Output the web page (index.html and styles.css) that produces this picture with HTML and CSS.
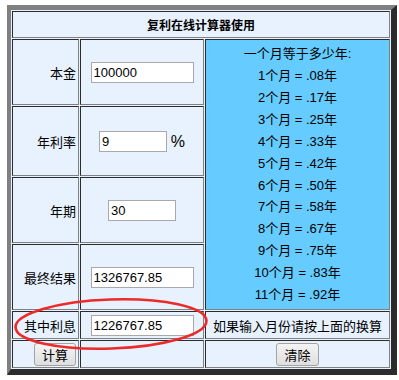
FILE: index.html
```html
<!DOCTYPE html>
<html lang="zh">
<head>
<meta charset="utf-8">
<title>复利在线计算器使用</title>
<link rel="stylesheet" href="styles.css">
</head>
<body>
<div class="page">
<table class="calc">
  <tr class="r-title">
    <td class="title" colspan="3">复利在线计算器使用</td>
  </tr>
  <tr class="r1">
    <td class="label">本金</td>
    <td class="field"><input class="inp wide" type="text" value="100000"></td>
    <td class="blue" rowspan="4">
      <div class="line">一个月等于多少年:</div>
      <div class="line">1个月 = .08年</div>
      <div class="line">2个月 = .17年</div>
      <div class="line">3个月 = .25年</div>
      <div class="line">4个月 = .33年</div>
      <div class="line">5个月 = .42年</div>
      <div class="line">6个月 = .50年</div>
      <div class="line">7个月 = .58年</div>
      <div class="line">8个月 = .67年</div>
      <div class="line">9个月 = .75年</div>
      <div class="line">10个月 = .83年</div>
      <div class="line">11个月 = .92年</div>
    </td>
  </tr>
  <tr class="r2">
    <td class="label">年利率</td>
    <td class="field"><input class="inp narrow" type="text" value="9"> <span class="pct">%</span></td>
  </tr>
  <tr class="r3">
    <td class="label">年期</td>
    <td class="field"><input class="inp narrow" type="text" value="30"></td>
  </tr>
  <tr class="r4">
    <td class="label">最终结果</td>
    <td class="field"><input class="inp wide" type="text" value="1326767.85"></td>
  </tr>
  <tr class="r5">
    <td class="label">其中利息</td>
    <td class="field"><input class="inp wide" type="text" value="1226767.85"></td>
    <td class="note">如果输入月份请按上面的换算</td>
  </tr>
  <tr class="r6">
    <td class="label"><button class="btn" type="button">计算</button></td>
    <td class="field"></td>
    <td class="note"><button class="btn" type="button">清除</button></td>
  </tr>
</table>
<svg class="mark" width="399" height="380" viewBox="0 0 399 380">
  <ellipse cx="111" cy="324" rx="95.5" ry="24.5" fill="none" stroke="#ec2a2a" stroke-width="2.6" transform="rotate(-2 111 324)"/>
</svg>
</div>
</body>
</html>
```
FILE: styles.css
```css
html, body {
  margin: 0;
  padding: 0;
  background: #ffffff;
}

.page {
  position: relative;
  width: 399px;
  height: 380px;
  overflow: hidden;
  padding-top: 5px;
  padding-left: 7px;
  box-sizing: border-box;
}

.calc {
  width: 390px;
  border-collapse: separate;
  border-spacing: 1px;
  border-style: solid;
  border-width: 5px 6px 6px 4px;
  border-color: #808080 #2c2c2c #2c2c2c #808080;
  background: #e8f2fe;
  font-family: "Liberation Sans", "Noto Sans CJK SC", sans-serif;
  font-size: 13px;
  color: #000;
}

.calc td {
  box-sizing: border-box;
  border-style: solid;
  border-width: 1px;
  border-color: #2c2c2c #808080 #808080 #2c2c2c;
  background: #e8f2fe;
  padding: 0;
  vertical-align: middle;
}

.r-title { height: 27px; }
.r1 { height: 66px; }
.r2 { height: 70px; }
.r3 { height: 66px; }
.r4 { height: 66px; }
.r5 { height: 28px; }
.r6 { height: 28px; }

.calc td.title {
  text-align: center;
  font-weight: bold;
  font-size: 12px;
}

.calc td.label {
  width: 67px;
  text-align: right;
  padding-right: 2px;
}

.calc td.field {
  width: 124px;
  text-align: center;
}

.calc td.blue {
  width: 185px;
  background: #66ccff;
  text-align: center;
}

.line {
  line-height: 21.9px;
  white-space: nowrap;
}

.calc td.note {
  text-align: center;
}

.inp {
  box-sizing: border-box;
  height: 21px;
  margin: 0;
  padding: 0 2px;
  border: 1px solid #a9a9a9;
  background: #fff;
  font-family: "Liberation Sans", sans-serif;
  font-size: 13px;
  color: #000;
  vertical-align: middle;
}

.inp.wide { width: 103px; }
.inp.narrow { width: 68px; }

.pct {
  font-size: 16px;
  vertical-align: middle;
}

.btn {
  box-sizing: border-box;
  height: 23px;
  margin: 0;
  padding: 0 7px;
  border: 1px solid #a3a3a3;
  border-radius: 3px;
  background: linear-gradient(#f4f4f4, #dedede);
  font-family: "Liberation Sans", "Noto Sans CJK SC", sans-serif;
  font-size: 13px;
  color: #000;
  vertical-align: middle;
}

.mark {
  position: absolute;
  top: 0;
  left: 0;
  pointer-events: none;
}
```
